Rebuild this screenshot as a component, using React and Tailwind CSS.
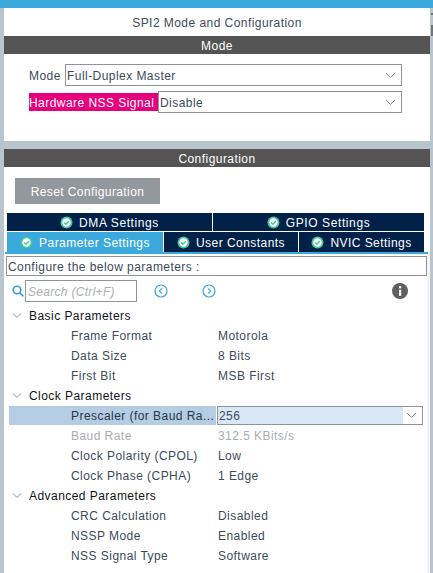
import React from "react";

const Chev = ({ className = "" }) => (
  <svg width="11" height="7" viewBox="0 0 11 7" className={className} fill="none" stroke="#8a8f94" strokeWidth="1">
    <path d="M1 1l4.5 4.5L10 1" />
  </svg>
);

const Check = () => (
  <svg width="13" height="13" viewBox="0 0 13 13" className="shrink-0">
    <circle cx="6.5" cy="6.5" r="6" fill="#3fc89a" />
    <circle cx="6.5" cy="6.5" r="4.2" fill="#fff" />
    <path d="M4.2 6.6l1.6 1.6 3-3" fill="none" stroke="#3fc89a" strokeWidth="1.4" />
  </svg>
);

const Tab = ({ children, className = "", active }) => (
  <div className={`flex items-center justify-center gap-[6px] text-white ${active ? "bg-[#3ca9dd]" : "bg-[#022149]"} ${className}`}>
    <Check />
    <span className="pt-[2px]">{children}</span>
  </div>
);

const Select = ({ value, className = "" }) => (
  <div className={`flex items-center justify-between border border-[#8f9499] pl-[1px] pr-[5px] h-[22px] bg-white ${className}`}>
    <span className="pt-[2px]">{value}</span>
    <Chev />
  </div>
);

const Group = ({ children }) => (
  <div className="flex items-center h-5 pt-[2px] text-[#10131a]">
    <svg width="10" height="6" viewBox="0 0 10 6" fill="none" stroke="#8a8f94" className="ml-[8px] mr-[7px]"><path d="M1 .5l4 4 4-4" /></svg>
    <span>{children}</span>
  </div>
);

const Row = ({ label, value, muted }) => (
  <div className={`flex items-center h-5 pt-[2px] pl-[67px] ${muted ? "text-[#a9adb1]" : "text-[#3c4a5c]"}`}>
    <span className="w-[147px]">{label}</span>
    <span>{value}</span>
  </div>
);

const Round = ({ d }) => (
  <svg width="14" height="14" viewBox="0 0 14 14" fill="none" stroke="#3ca9dd" strokeWidth="1.2">
    <circle cx="7" cy="7" r="6" />
    <path d={d} />
  </svg>
);

export default function App() {
  return (
    <div className="relative w-[433px] h-[573px] overflow-hidden bg-[#b9c5cc] text-[12px] tracking-[0.45px] text-[#3c4a5c]" style={{ fontFamily: '"Liberation Sans", Arial, sans-serif' }}>
      <div className="h-2 bg-[#3ca9dd]" />
      <div className="absolute right-0 top-[13px] w-[2px] h-[2px] bg-[#6f767b]" />
      <div className="absolute right-0 top-[25px] w-[2px] h-[11px] bg-[#6f767b]" />
      <div className="ml-1 mr-[3px] flex flex-col">
        <div className="bg-white h-[133px] flex flex-col">
          <div className="h-7 pt-[2px] flex items-center justify-center">SPI2 Mode and Configuration</div>
          <div className="h-[18px] pt-[2px] bg-[#535453] text-white flex items-center justify-center">Mode</div>
          <div className="pl-[25px] pr-[28px] pt-[10px] flex flex-col gap-[5px]">
            <div className="flex items-center">
              <span className="w-9 pt-[2px]">Mode</span>
              <Select value="Full-Duplex Master" className="flex-1" />
            </div>
            <div className="flex items-center">
              <span className="bg-[#e6007e] text-white h-[18px] pt-[2px] flex items-center w-[129px] whitespace-nowrap">Hardware NSS Signal</span>
              <Select value="Disable" className="flex-1" />
            </div>
          </div>
        </div>
        <div className="h-2" />
        <div className="h-[18px] pt-[2px] bg-[#535453] text-white flex items-center justify-center">Configuration</div>
        <div className="bg-white h-[406px] flex flex-col">
          <div className="pl-[11px] pt-[11px]">
            <div className="w-[145px] h-[26px] pt-[2px] bg-[#93989d] text-white flex items-center justify-center tracking-[0.4px]">Reset Configuration</div>
          </div>
          <div className="pl-[3px] pr-[6px] pt-[9px]">
            <div className="flex gap-px h-[18px] tracking-[0.6px]">
              <Tab className="w-[205px]">DMA Settings</Tab>
              <Tab className="flex-1">GPIO Settings</Tab>
            </div>
            <div className="flex gap-px h-5 mt-px">
              <Tab active className="w-[156px]">Parameter Settings</Tab>
              <Tab className="w-[134px]">User Constants</Tab>
              <Tab className="flex-1">NVIC Settings</Tab>
            </div>
          </div>
          <div className="h-[2px] bg-[#3ca9dd] ml-px mr-[2px]" />
          <div className="flex-1 border-r-[3px] border-[#f3f5f7]">
            <div className="ml-[2px] mt-[2px] h-5 pt-[2px] border border-[#8f9499] flex items-center pl-px">Configure the below parameters :</div>
            <div className="flex items-center h-[22px] mt-1 pl-2">
              <svg width="12" height="12" viewBox="0 0 12 12" fill="none" stroke="#2f9fdc" strokeWidth="1.6" className="mr-[1px]">
                <circle cx="5" cy="5" r="3.8" />
                <path d="M8 8l3.4 3.4" />
              </svg>
              <div className="w-[112px] h-[22px] pt-[2px] border border-[#8f9499] flex items-center pl-[2px] italic tracking-[0.3px] text-[#a9adb1]">Search (Ctrl+F)</div>
              <div className="ml-[17px]"><Round d="M8 4.3L5.3 7 8 9.7" /></div>
              <div className="ml-[34px]"><Round d="M6 4.3L8.7 7 6 9.7" /></div>
              <svg width="16" height="16" viewBox="0 0 16 16" className="ml-[176px]">
                <circle cx="8" cy="8" r="8" fill="#5f5f5f" />
                <rect x="7" y="6.8" width="2.2" height="6" fill="#fff" />
                <rect x="7" y="3.2" width="2.2" height="2.2" fill="#fff" />
              </svg>
            </div>
            <div className="mt-[3px]">
              <Group>Basic Parameters</Group>
              <Row label="Frame Format" value="Motorola" />
              <Row label="Data Size" value="8 Bits" />
              <Row label="First Bit" value="MSB First" />
              <Group>Clock Parameters</Group>
              <div className="flex h-[20px] items-stretch pt-px">
                <div className="ml-[5px] w-[207px] bg-[#b5cde4] pl-[62px] flex items-center whitespace-nowrap text-[#2a3646]">Prescaler (for Baud Ra...</div>
                <div className="ml-px mr-[4px] flex-1 border border-[#8f9499] flex items-center justify-between pl-px bg-[#d8e7f5]">
                  <span>256</span>
                  <span className="bg-white h-full flex items-center pl-[3px] pr-[5px]"><Chev /></span>
                </div>
              </div>
              <Row muted label="Baud Rate" value="312.5 KBits/s" />
              <Row label="Clock Polarity (CPOL)" value="Low" />
              <Row label="Clock Phase (CPHA)" value="1 Edge" />
              <Group>Advanced Parameters</Group>
              <Row label="CRC Calculation" value="Disabled" />
              <Row label="NSSP Mode" value="Enabled" />
              <Row label="NSS Signal Type" value="Software" />
            </div>
          </div>
        </div>
      </div>
    </div>
  );
}
